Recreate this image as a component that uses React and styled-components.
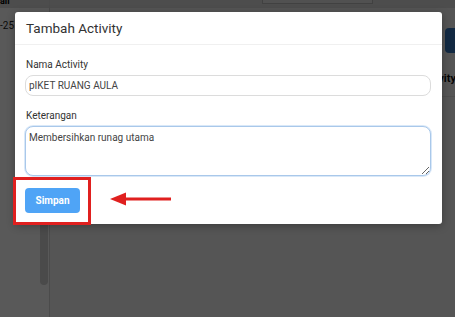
import React, { useEffect, useRef } from "react";
import styled, { createGlobalStyle } from "styled-components";

const Global = createGlobalStyle`
  html, body { margin: 0; padding: 0; }
  body { font-family: Roboto, "Liberation Sans", Arial, sans-serif; overflow: hidden; }
  * { box-sizing: border-box; }
`;

const Page = styled.div`
  position: relative;
  width: 455px;
  height: 317px;
  display: grid;
  grid-template-columns: 50px 1fr;
  background: #f3f3f3;
  overflow: hidden;
`;

const Sidebar = styled.aside`
  background: #ffffff;
  border-right: 1px solid #d8d8d8;
  display: flex;
  flex-direction: column;
  position: relative;
`;

const SideTop = styled.div`
  height: 8px;
  background: #dcdcdc;
  font-size: 9px;
  font-weight: 700;
  line-height: 0px;
  color: #000;
  overflow: hidden;
  padding-top: 1px;
`;

const SideDate = styled.div`
  height: 37px;
  border-bottom: 1px solid #ffffff;
  font-size: 10px;
  color: #222;
  padding-top: 12px;
`;

const SideBody = styled.div`
  flex: 1;
  display: flex;
  justify-content: flex-end;
  padding-right: 1px;
`;

const ScrollThumb = styled.div`
  width: 8px;
  height: 240px;
  border-radius: 0 0 4px 4px;
  background: #d3d3d3;
`;

const SideFoot = styled.div`
  height: 32px;
  font-size: 10px;
  color: #222;
  padding-top: 12px;
  margin-left: -10px;
`;

const Main = styled.main`
  display: flex;
  flex-direction: column;
`;

const TopBar = styled.div`
  height: 8px;
  background: #dcdcdc;
  display: flex;
  padding-left: 212px;
`;

const TopField = styled.div`
  width: 111px;
  height: 4px;
  border: 1px solid #bbb;
  border-top: none;
  background: #e8e8e8;
`;

const ContentRow = styled.div`
  display: flex;
  justify-content: flex-end;
  padding-top: 20px;
`;

const BlueBtn = styled.div`
  width: 30px;
  height: 25px;
  border-radius: 4px;
  background: #3577bd;
  margin-right: -20px;
`;

const Heading = styled.div`
  text-align: right;
  font-size: 11px;
  font-weight: 700;
  color: #111;
  padding-top: 19px;
  margin-right: -1px;
  height: 44px;
  border-bottom: 1px solid #e0e0e0;
`;

const Overlay = styled.div`
  position: absolute;
  inset: 0;
  background: rgba(0, 0, 0, 0.65);
  padding: 12px 13px 0 15px;
`;

const Modal = styled.div`
  position: relative;
  width: 427px;
  background: #fff;
  border-radius: 3px;
  box-shadow: 0 2px 8px rgba(0, 0, 0, 0.3);
`;

const ModalHeader = styled.div`
  height: 33px;
  border-bottom: 1px solid #f0f0f0;
  display: flex;
  align-items: center;
  padding: 0 11px;
`;

const Title = styled.h2`
  margin: 0;
  font-size: 13.5px;
  font-weight: 400;
  color: #333;
`;

const ModalBody = styled.div`
  padding: 13px 10px 0 10px;
  display: flex;
  flex-direction: column;
`;

const Label = styled.label`
  display: block;
  font-size: 10px;
  color: #333;
  padding-left: 1px;
  line-height: 13px;
  margin-bottom: 4px;
`;

const Field = styled.div`
  margin-bottom: ${(p) => p.$gap}px;
`;

const Input = styled.input`
  display: block;
  width: 406px;
  height: 21px;
  border: 1px solid #dcdcdc;
  border-radius: 8px;
  padding: 0 3px;
  font-family: Roboto, "Liberation Sans", Arial, sans-serif;
  font-size: 10px;
  color: #444;
  outline: none;
  background: #fff;
`;

const TextArea = styled.textarea`
  display: block;
  width: 406px;
  height: 50px;
  border: 1px solid #a9c8ea;
  border-radius: 8px;
  padding: 4px 3px;
  font-family: Roboto, "Liberation Sans", Arial, sans-serif;
  font-size: 10px;
  line-height: 13px;
  color: #444;
  outline: none;
  box-shadow: 0 0 0 1px rgba(170, 205, 240, 0.45);
  resize: vertical;
  background: #fff;
`;

const Footer = styled.div`
  display: flex;
  align-items: center;
  margin-top: 1px;
`;

const Highlight = styled.div`
  border: 3px solid #e0201f;
  padding: 8px 8px 9px 9px;
  margin-left: -12px;
  margin-bottom: -1px;
  display: flex;
`;

const Button = styled.button`
  width: 55px;
  height: 25px;
  border: none;
  border-radius: 4px;
  background: #4fa4f6;
  color: #fff;
  font-family: Roboto, "Liberation Sans", Arial, sans-serif;
  font-size: 10px;
  font-weight: 700;
  cursor: pointer;
`;

const Arrow = styled.svg`
  display: block;
  margin-left: 19px;
  margin-top: -4px;
`;

export default function App() {
  const ta = useRef(null);
  useEffect(() => {
    if (ta.current) {
      ta.current.focus();
      ta.current.setSelectionRange(13, 13);
    }
  }, []);
  return (
    <>
      <Global />
      <Page>
        <Sidebar>
          <SideTop>ail</SideTop>
          <SideDate>-25</SideDate>
          <SideBody>
            <ScrollThumb />
          </SideBody>
          <SideFoot>n</SideFoot>
        </Sidebar>
        <Main>
          <TopBar>
            <TopField />
          </TopBar>
          <ContentRow>
            <BlueBtn />
          </ContentRow>
          <Heading>Activity</Heading>
        </Main>
        <Overlay>
          <Modal>
            <ModalHeader>
              <Title>Tambah Activity</Title>
            </ModalHeader>
            <ModalBody>
              <Field $gap={13}>
                <Label>Nama Activity</Label>
                <Input defaultValue="pIKET RUANG AULA" />
              </Field>
              <Field $gap={0}>
                <Label>Keterangan</Label>
                <TextArea ref={ta} defaultValue="Membersihkan runag utama" />
              </Field>
              <Footer>
                <Highlight>
                  <Button>Simpan</Button>
                </Highlight>
                <Arrow width="62" height="16" viewBox="0 0 62 16">
                  <polygon points="0,8 16,1.5 16,14.5" fill="#e0201f" />
                  <rect x="14" y="6.5" width="47" height="3" fill="#e0201f" />
                </Arrow>
              </Footer>
            </ModalBody>
          </Modal>
        </Overlay>
      </Page>
    </>
  );
}
